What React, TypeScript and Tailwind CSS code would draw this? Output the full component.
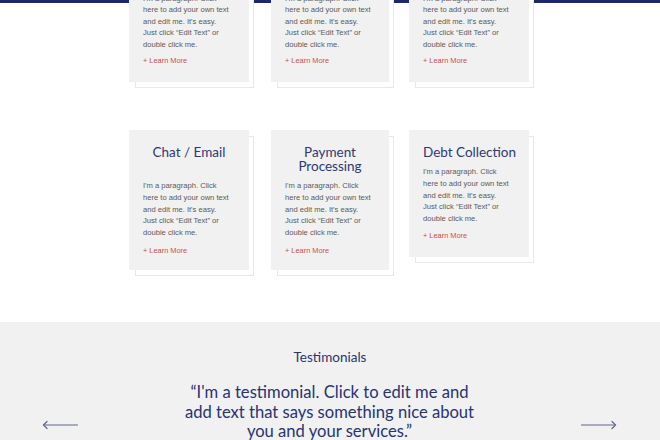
import React from "react";

const para = ["I'm a paragraph. Click", "here to add your own text", "and edit me. It's easy.", "Just click \u201cEdit Text\u201d or", "double click me."];

function Card({ children, pb, w, ml }: { children?: React.ReactNode; pb?: string; w: string; ml: string }) {
  return (
    <div className={`relative ${w} ${ml} shrink-0`}>
      <div className="absolute left-[6px] top-[6px] -right-[5px] -bottom-[6px] bg-white border border-[#e8e8e8]" />
      <div className={`relative bg-[#f1f1f1] px-[14px] ${pb ?? "pb-[15px]"}`}>{children}</div>
    </div>
  );
}

function Para() {
  return (
    <div className="text-[7.6px] leading-[11.6px] text-[#5a5a5a] whitespace-nowrap" style={{ fontFamily: "'Liberation Sans', Arial, sans-serif" }}>
      {para.map((l) => (
        <div key={l}>{l}</div>
      ))}
    </div>
  );
}

function Learn({ mt }: { mt: string }) {
  return (
    <div className={`${mt} text-[7.4px] leading-[10px] text-[#cf4d4d]`} style={{ fontFamily: "'Liberation Sans', Arial, sans-serif" }}>
      + Learn More
    </div>
  );
}

function Title({ lines, h }: { lines: string[]; h: string }) {
  return (
    <div className={`${h} mb-[7px] text-center text-[13.5px] leading-[14px] text-[#2c3878] whitespace-nowrap`} style={{ fontFamily: "Lato, 'Open Sans', sans-serif" }}>
      {lines.map((l) => (
        <div key={l}>{l}</div>
      ))}
    </div>
  );
}

function Arrow({ dir }: { dir: "left" | "right" }) {
  return (
    <svg width="37" height="12" viewBox="0 0 37 12" className="shrink-0">
      {dir === "left" ? (
        <g stroke="#5f6794" strokeWidth="1.2" fill="none" strokeLinecap="round">
          <line x1="1.5" y1="6" x2="35.5" y2="6" />
          <polyline points="5,2.5 1.5,6 5,9.5" />
        </g>
      ) : (
        <g stroke="#5f6794" strokeWidth="1.2" fill="none" strokeLinecap="round">
          <line x1="1.5" y1="6" x2="35.5" y2="6" />
          <polyline points="32,2.5 35.5,6 32,9.5" />
        </g>
      )}
    </svg>
  );
}

const widths = ["w-[120px]", "w-[118px]", "w-[120px]"];
const margins = ["ml-0", "ml-[22px]", "ml-[20px]"];

export default function App() {
  return (
    <div className="w-[660px] h-[440px] overflow-hidden bg-white flex flex-col">
      <div className="h-[3px] w-full bg-[#1c2a6c] shrink-0" />
      <div className="flex items-start pl-[129px] -mt-[14px] shrink-0">
        {[0, 1, 2].map((i) => (
          <Card key={i} w={widths[i]} ml={margins[i]} pb="pb-[16px]">
            <div className="pt-[3.5px]">
              <Para />
            </div>
            <Learn mt="mt-[6px]" />
          </Card>
        ))}
      </div>
      <div className="flex items-start pl-[129px] mt-[48px] shrink-0">
        <Card w={widths[0]} ml={margins[0]} pb="pb-[14px]">
          <div className="pt-[15px]">
            <Title lines={["Chat / Email"]} h="h-[28px]" />
            <Para />
            <Learn mt="mt-[8px]" />
          </div>
        </Card>
        <Card w={widths[1]} ml={margins[1]} pb="pb-[14px]">
          <div className="pt-[15px]">
            <Title lines={["Payment", "Processing"]} h="h-[28px]" />
            <Para />
            <Learn mt="mt-[8px]" />
          </div>
        </Card>
        <Card w={widths[2]} ml={margins[2]} pb="pb-[16px]">
          <div className="pt-[15px]">
            <Title lines={["Debt Collection"]} h="h-[14px]" />
            <Para />
            <Learn mt="mt-[7px]" />
          </div>
        </Card>
      </div>
      <div className="mt-[52px] flex-1 bg-[#f1f1f1] pt-[27px]" style={{ fontFamily: "Lato, 'Open Sans', sans-serif" }}>
        <div className="text-center text-[13.5px] leading-[16px] text-[#2a3470]">Testimonials</div>
        <div className="mt-[18px] flex justify-between items-start pl-[42px] pr-[43px]">
          <div className="mt-[36px]"><Arrow dir="left" /></div>
          <div className="text-center text-[16.6px] leading-[19.5px] text-[#283371] w-[300px]">
            <div>{"\u201cI'm a testimonial. Click to edit me and"}</div>
            <div>add text that says something nice about</div>
            <div>{"you and your services.\u201d"}</div>
          </div>
          <div className="mt-[36px]"><Arrow dir="right" /></div>
        </div>
      </div>
    </div>
  );
}
